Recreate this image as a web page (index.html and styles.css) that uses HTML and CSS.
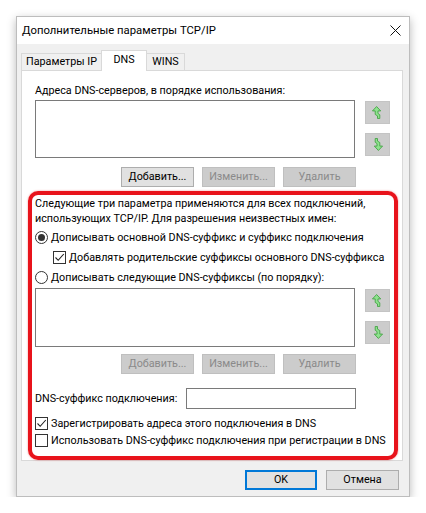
FILE: index.html
```html
<!DOCTYPE html>
<html lang="ru">
<head>
<meta charset="utf-8">
<title>Дополнительные параметры TCP/IP</title>
<link rel="stylesheet" href="styles.css">
</head>
<body>
<div class="window">
  <div class="titlebar">
    <span class="title">Дополнительные параметры TCP/IP</span>
    <svg class="close" width="11" height="11" viewBox="0 0 11 11"><path d="M0.5 0.5 L10.5 10.5 M10.5 0.5 L0.5 10.5" stroke="#111" stroke-width="1" fill="none"/></svg>
  </div>
  <div class="body">
    <div class="tabs">
      <div class="tab t1">Параметры IP</div>
      <div class="tab t2 active">DNS</div>
      <div class="tab t3">WINS</div>
    </div>
    <div class="panel">
      <div class="label">Адреса DNS-серверов, в порядке использования:</div>
      <div class="listrow">
        <div class="listbox lb1"></div>
        <div class="arrows a1">
          <div class="abtn">
            <svg width="25" height="23" viewBox="0 0 25 23"><path d="M11.5 5 L16 9.8 L13 9.8 L13 12.5 L15 14 L15 18 L12.5 18 L12.5 15.2 L10 13.6 L10 9.8 L7 9.8 Z" fill="#8ee28e" stroke="#3d9f3d" stroke-width="0.9" stroke-linejoin="round"/></svg>
          </div>
          <div class="abtn">
            <svg width="25" height="23" viewBox="0 0 25 23"><path d="M10 5 L12.5 5 L12.5 7.8 L15 9.4 L15 13.2 L18 13.2 L13.5 18 L9 13.2 L12 13.2 L12 10.5 L10 9 Z" fill="#8ee28e" stroke="#3d9f3d" stroke-width="0.9" stroke-linejoin="round"/></svg>
          </div>
        </div>
      </div>
      <div class="btnrow">
        <div class="btn">Добавить...</div>
        <div class="btn disabled">Изменить...</div>
        <div class="btn disabled">Удалить</div>
      </div>
      <div class="group">
        <div class="mark"></div>
        <p class="desc">Следующие три параметра применяются для всех подключений,<br>использующих TCP/IP. Для разрешения неизвестных имен:</p>
        <div class="row r1"><span class="radio on"></span><span>Дописывать основной DNS-суффикс и суффикс подключения</span></div>
        <div class="row r2 indent"><span class="check"><svg width="11" height="11" viewBox="0 0 11 11"><path d="M1.5 5.5 L4.2 8.3 L9.8 2" stroke="#222" stroke-width="1.1" fill="none"/></svg></span><span>Добавлять родительские суффиксы основного DNS-суффикса</span></div>
        <div class="row r3"><span class="radio"></span><span>Дописывать следующие DNS-суффиксы (по порядку):</span></div>
        <div class="listrow lr2">
          <div class="listbox lb2"></div>
          <div class="arrows a2">
            <div class="abtn">
              <svg width="25" height="23" viewBox="0 0 25 23"><path d="M11.5 5 L16 9.8 L13 9.8 L13 12.5 L15 14 L15 18 L12.5 18 L12.5 15.2 L10 13.6 L10 9.8 L7 9.8 Z" fill="#8ee28e" stroke="#3d9f3d" stroke-width="0.9" stroke-linejoin="round"/></svg>
            </div>
            <div class="abtn">
              <svg width="25" height="23" viewBox="0 0 25 23"><path d="M10 5 L12.5 5 L12.5 7.8 L15 9.4 L15 13.2 L18 13.2 L13.5 18 L9 13.2 L12 13.2 L12 10.5 L10 9 Z" fill="#8ee28e" stroke="#3d9f3d" stroke-width="0.9" stroke-linejoin="round"/></svg>
            </div>
          </div>
        </div>
        <div class="btnrow br2">
          <div class="btn disabled">Добавить...</div>
          <div class="btn disabled">Изменить...</div>
          <div class="btn disabled">Удалить</div>
        </div>
        <div class="suffix">
          <span>DNS-суффикс подключения:</span>
          <div class="input"></div>
        </div>
        <div class="row r4"><span class="check"><svg width="11" height="11" viewBox="0 0 11 11"><path d="M1.5 5.5 L4.2 8.3 L9.8 2" stroke="#222" stroke-width="1.1" fill="none"/></svg></span><span>Зарегистрировать адреса этого подключения в DNS</span></div>
        <div class="row r5"><span class="check"></span><span>Использовать DNS-суффикс подключения при регистрации в DNS</span></div>
      </div>
    </div>
    <div class="footer">
      <div class="btn ok">OK</div>
      <div class="btn cancel">Отмена</div>
    </div>
  </div>
</div>
</body>
</html>
```
FILE: styles.css
```css
* { box-sizing: border-box; }
html, body { margin: 0; padding: 0; background: #ffffff; }
body {
  font-family: Roboto, "Liberation Sans", sans-serif;
  font-size: 10.75px;
  color: #000;
  white-space: nowrap;
}
.window {
  margin: 16px 0 0 16px;
  width: 394px;
  border: 1px solid #bdbdbd;
  background: #f0f0f0;
  box-shadow: 0 3px 9px rgba(0,0,0,0.28);
  display: flex;
  flex-direction: column;
}
.titlebar {
  height: 27px;
  background: #ffffff;
  display: flex;
  align-items: center;
  justify-content: space-between;
  padding-left: 5px;
  padding-right: 8px;
}
.title { line-height: 15px; font-size: 11.3px; }
.close { display: block; }
.body {
  padding: 0 6px 0 4px;
  display: flex;
  flex-direction: column;
}
.tabs {
  height: 26px;
  display: flex;
  align-items: flex-end;
}
.tab {
  height: 17px;
  border: 1px solid #d9d9d9;
  border-bottom: none;
  background: #f0f0f0;
  text-align: center;
  line-height: 15px;
}
.t1 { width: 81px; }
.t2 { width: 46px; margin-left: -1px; }
.t3 { width: 39px; margin-left: -1px; }
.tab.active {
  height: 21px;
  background: #ffffff;
  margin-bottom: -1px;
  position: relative;
  z-index: 1;
  line-height: 17px;
}
.panel {
  border: 1px solid #d9d9d9;
  background: #ffffff;
  padding: 12px 12px 12px 13px;
  display: flex;
  flex-direction: column;
}
.label { line-height: 15px; }
.listrow {
  margin-top: 2px;
  display: flex;
  gap: 10px;
}
.listbox {
  width: 321px;
  border: 1px solid #7a7a7a;
  background: #fff;
}
.lb1 { height: 58px; }
.lb2 { height: 59px; }
.arrows {
  display: flex;
  flex-direction: column;
  gap: 9px;
  padding-top: 1px;
}
.abtn {
  width: 25px;
  height: 23px;
  background: #cccccc;
  border: 1px solid #c4c4c4;
  display: flex;
  align-items: center;
  justify-content: center;
}
.abtn svg { display: block; }
.btnrow {
  width: 321px;
  margin-top: 9px;
  display: flex;
  justify-content: flex-end;
  gap: 8px;
}
.btn {
  width: 73px;
  height: 20px;
  border: 1px solid #adadad;
  background: #e1e1e1;
  text-align: center;
  line-height: 18px;
}
.btn.disabled {
  background: #cccccc;
  border-color: #bfbfbf;
  color: #8a8a8a;
}
.group {
  position: relative;
  margin-top: 9px;
  display: flex;
  flex-direction: column;
}
.mark {
  position: absolute;
  top: -5px;
  left: -7px;
  right: -8px;
  bottom: -12px;
  border: 4px solid #e8131b;
  border-radius: 10px;
  box-shadow: 0 0 2px rgba(232,19,27,0.5);
  pointer-events: none;
  z-index: 2;
}
.desc {
  margin: 0;
  line-height: 15px;
}
.row {
  height: 15px;
  display: flex;
  align-items: center;
  gap: 3px;
  line-height: 15px;
}
.r1 { margin-top: 4px; }
.r2 { margin-top: 5px; }
.r3 { margin-top: 5px; }
.indent { margin-left: 18px; }
.r4 { margin-top: 7px; }
.r5 { margin-top: 2px; }
.radio {
  width: 13px;
  height: 13px;
  flex: none;
  border: 1px solid #333;
  border-radius: 50%;
  background: #fff;
  display: flex;
  align-items: center;
  justify-content: center;
}
.radio.on::after {
  content: "";
  width: 7px;
  height: 7px;
  border-radius: 50%;
  background: #333;
}
.check {
  width: 13px;
  height: 13px;
  flex: none;
  border: 1px solid #333;
  background: #fff;
  display: flex;
  align-items: center;
  justify-content: center;
}
.check svg { display: block; }
.lr2 { margin-top: 3px; }
.br2 { margin-top: 7px; }
.suffix {
  margin-top: 14px;
  display: flex;
  align-items: center;
  justify-content: space-between;
  width: 321px;
  height: 21px;
}
.input {
  width: 170px;
  height: 21px;
  border: 1px solid #7a7a7a;
  background: #fff;
}
.footer {
  padding: 9px 4px 6px 0;
  display: flex;
  justify-content: flex-end;
  gap: 9px;
}
.ok {
  width: 72px;
  border: 2px solid #0078d7;
  line-height: 16px;
}
.cancel { width: 73px; }
```
